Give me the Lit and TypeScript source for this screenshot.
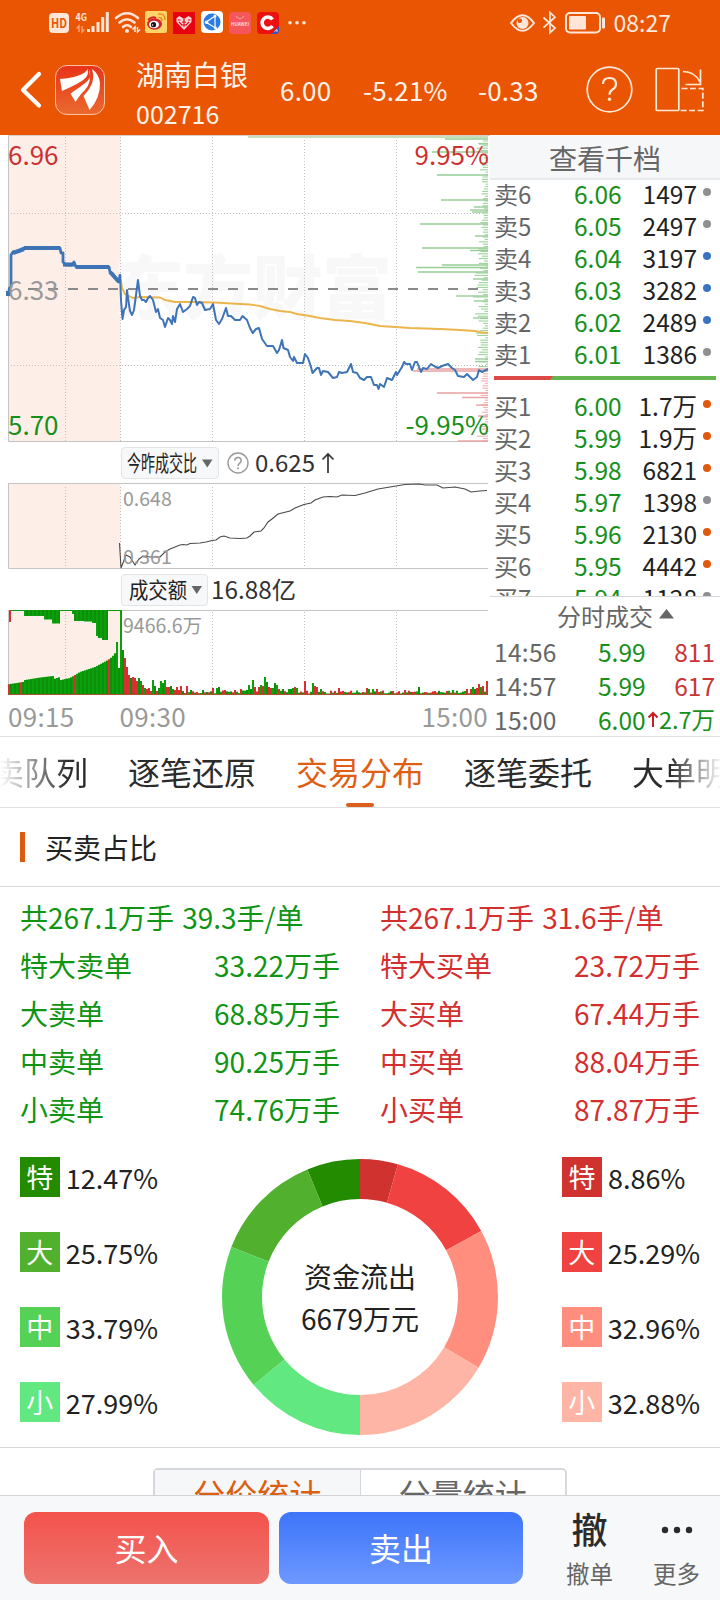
import { LitElement, html, svg, css } from "lit";
import { customElement } from "lit/decorators.js";

const FONT = css`"Noto Sans CJK SC", "Noto Sans", sans-serif`;

/** Small deterministic generator, for the filler ticks of the charts. */
function rng(seed: number) {
  let s = seed;
  return () => {
    s = (s * 1103515245 + 12345) & 0x7fffffff;
    return s / 0x7fffffff;
  };
}

@customElement("status-bar")
class StatusBar extends LitElement {
  static styles = css`
    :host { display: flex; height: 44px; justify-content: space-between; padding: 0 49px; font-family: ${FONT}; }
    svg { display: block; }
    .right { display: flex; align-items: flex-start; gap: 8px; }
    .time { font-size: 23px; line-height: 44px; color: #ffeade; }
  `;
  render() {
    const c = "#ffe6d8";
    return html`
      <svg width="260" height="44" viewBox="49 0 260 44">
        <rect x="49" y="13" width="20" height="20" rx="4" fill=${c} />
        <text x="51" y="28.3" font-size="13" font-weight="700" fill="#ea5504" textLength="16" lengthAdjust="spacingAndGlyphs">HD</text>
        <text x="75.5" y="20.5" font-size="10.5" font-weight="700" fill=${c} textLength="11.5" lengthAdjust="spacingAndGlyphs">4G</text>
        <path d="M79 32v-6l-2.5 2.5M82 26v6l2.500-2.500" stroke="#f4a077" stroke-width="1.5" fill="none" />
        <path d="M88.500 32v-3M93 32v-6M98 32v-10M102.700 32v-15M107.300 32v-20" stroke=${c} stroke-width="3" />
        <path d="M116 18q11-9.500 22 0M119.500 22.500q7.500-6.500 15 0M123 27q4-3.500 8 0" stroke=${c} stroke-width="2.600" fill="none" stroke-linecap="round" />
        <circle cx="127" cy="31" r="2" fill=${c} />
        <path d="M135 32v-5l-2.500 2.500M137.500 27v5l2.500-2.500" stroke=${c} stroke-width="1.500" fill="none" />
        <rect x="145" y="11" width="22" height="22" rx="2" fill="#fdd46a" />
        <ellipse cx="154.500" cy="24" rx="7.500" ry="5.700" fill="#d8232a" />
        <path d="M148 20q4-4 8-2" stroke="#d8232a" stroke-width="2" fill="none" />
        <ellipse cx="154" cy="24.500" rx="5" ry="3.800" fill="#fff" />
        <circle cx="153.500" cy="24.700" r="2.600" fill="#161616" />
        <circle cx="152.600" cy="25" r=".8" fill="#fff" />
        <path d="M158.500 17.500q3.500-.5 3.500 3.500M158 14q7-1 7 6" stroke="#ee8a1c" stroke-width="1.500" fill="none" />
        <rect x="173" y="12" width="22" height="22" fill="#e60012" />
        <path d="M184 30l-7.500-8v-4l3-2 4.500 3 4.500-3 3 2v4z" fill="#fbd7d7" />
        <path d="M178 20h2.500M182 22h4M188 20h2.500M181 25h6M184 19v8M179 22l3 3M189 22l-3 3" stroke="#e60012" stroke-width="1.100" />
        <rect x="201" y="11" width="22" height="22" rx="4" fill="#fff" />
        <circle cx="212" cy="22" r="8.500" fill="#2a7be4" />
        <path d="M206 22.300l9-6.300M206 22.300l9.500 5.700M215 16v12" stroke="#fff" stroke-width="1.200" fill="none" />
        <circle cx="206.500" cy="22.300" r="1.800" fill="#fff" /><circle cx="215" cy="16" r="1.500" fill="#fff" /><circle cx="215.500" cy="28" r="1.500" fill="#fff" />
        <rect x="229" y="12" width="22" height="22" rx="4" fill="#f4565c" />
        <path d="M236 16q4 5.500 8 0" stroke="#f9a9a4" stroke-width="1.200" fill="none" />
        <text x="231" y="26.300" font-size="4.800" font-weight="700" fill="#ffd9d4" textLength="18" lengthAdjust="spacingAndGlyphs">HUAWEI</text>
        <rect x="257" y="12" width="22" height="22" rx="4" fill="#ec1011" />
        <path d="M272.500 19.500a5.700 5.700 0 1 0 0 6.500" stroke="#fff" stroke-width="3.600" fill="none" />
        <path d="M279 26v4q0 4-4 4h-3.500z" fill="#2f57c4" />
        <path d="M274.500 31.500l2.500-2v2.500" stroke="#fff" stroke-width=".8" fill="none" />
        <circle cx="290" cy="22.700" r="1.800" fill=${c} /><circle cx="297" cy="22.700" r="1.800" fill=${c} /><circle cx="304" cy="22.700" r="1.800" fill=${c} />
      </svg>
      <div class="right">
        <svg width="97" height="44" viewBox="509 0 97 44">
          <path d="M511 23q11.500-15.500 23 0q-11.500 15.500-23 0z" fill="none" stroke=${c} stroke-width="2" />
          <circle cx="522.500" cy="23" r="6" fill=${c} /><circle cx="519.800" cy="20.700" r="2.300" fill="#ea5504" />
          <path d="M543.500 17.500l11.500 10.500-5 4.700V12.500l5 4.700-11.500 10.500" fill="none" stroke=${c} stroke-width="1.700" />
          <rect x="566" y="13" width="34" height="19.500" rx="4" fill="none" stroke=${c} stroke-width="2" />
          <rect x="569" y="16" width="17" height="13.500" rx="1" fill=${c} />
          <rect x="602" y="17.500" width="3" height="11" rx="1" fill=${c} />
        </svg>
        <span class="time">08:27</span>
      </div>`;
  }
}

@customElement("title-bar")
class TitleBar extends LitElement {
  static styles = css`
    :host { display: flex; height: 91px; box-sizing: border-box; font-family: ${FONT}; color: #fff3ea; align-items: center; padding: 0 15px 0 18px; font-size: 26px; }
    svg { display: block; flex: none; }
    .logo { margin-left: 12px; }
    .name { margin-left: 31px; width: 144px; padding-top: 8px; }
    .name div { font-size: 28px; line-height: 39px; height: 39px; }
    .name .code { font-size: 25px; line-height: 38px; height: 38px; }
    .num { line-height: 40px; white-space: nowrap; letter-spacing: 0.2px; }
    .n1 { width: 83px; } .n2 { width: 115px; } .n3 { width: 108px; }
    .rotate { margin-left: 22px; }
  `;
  render() {
    return html`
      <svg width="25" height="40" viewBox="18 70 25 40"><path d="M39 74L23 90l16 15.500" fill="none" stroke="#fff" stroke-width="4.200" stroke-linecap="round" stroke-linejoin="round" /></svg>
      <svg class="logo" width="50" height="50" viewBox="55 65 50 50">
        <defs><linearGradient id="g" x1="0" y1="0" x2="0" y2="1"><stop offset="0" stop-color="#e8331a" /><stop offset="1" stop-color="#ea6a2e" /></linearGradient></defs>
        <rect x="55.500" y="65.500" width="49" height="49" rx="11.500" fill="url(#g)" stroke="#f8c39f" />
        <path d="M60 79q16-1 24-6 3-2 3.500-4 1.500 5-2 9-5 5-23.500 13z" fill="#fff" />
        <path d="M89 69q3 7-1 11.500-4 4-17.500 13l5 8.500q5-8 9-11.500 8-8 4.500-21.500z" fill="#fff" />
        <path d="M92 69q3 10-1.500 17.500-2 4-7 9.500l6 14q11-12 10.500-27-1-9-8-14z" fill="#fff" />
      </svg>
      <div class="name"><div>湖南白银</div><div class="code">002716</div></div>
      <span class="num n1">6.00</span><span class="num n2">-5.21%</span><span class="num n3">-0.33</span>
      <svg width="47" height="47" viewBox="585.500 66.500 47 47">
        <circle cx="609" cy="90" r="22.300" fill="none" stroke="#fdebd8" stroke-width="1.700" />
        <path d="M602.500 84.500q0-6 6.500-6t6.500 6q0 3.500-3.500 5.500-3 2-3 5.200" fill="none" stroke="#fdebd8" stroke-width="2.200" />
        <circle cx="609" cy="99.700" r="1.700" fill="#fdebd8" />
      </svg>
      <svg class="rotate" width="50" height="47" viewBox="654.500 66.500 50 47">
        <rect x="655.700" y="69" width="22.600" height="42" rx="1" fill="none" stroke="#fdebd8" stroke-width="1.700" />
        <path d="M682.500 72q12 0 17 10.500M700 70v15h-15" fill="none" stroke="#fdebd8" stroke-width="1.700" />
        <path d="M681 89h21.300v22H680" fill="none" stroke="#fdebd8" stroke-width="1.700" stroke-dasharray="6 2.500" />
      </svg>`;
  }
}

const PRE =
  "8,296 9.500,288 11,287 11,255 13,252 20,251 22,249 24,248 60,248 61,253 63,253 63,262 66,265 72,265 74,262 76,267 109,267 110,272 113,274 119,282 120,275";
const PRICE =
  "120,274 121,300 122.500,319 124,310 126,307 127,290 128,298 130,311 132,315 134,310 136,295 138,280 140,296 142,300 144,300 146,302 148,298 150,296 153,300 156,312 158,309 160,318 163,320 165,327 168,318 170,320 172,324 173,316 175,322 177,309 180,304 183,312 187,309 190,306 193,297 195,298 197,305 199,302 202,303 205,310 210,309 213,304 216,320 219,324 222,319 226,308 228,316 231,316 235,320 240,320 242.500,316 247,320 250,328 252.700,333 256,329 259,328 262,339 267,346 273,346 277,353 279,350 282,340 283.500,348 288,350 290,357 293,361 294,357 297,363 303,363 305,354 308,358 311,367 312.500,373 317,368 319,368 321,375 323,371 328,372 333,378 337,377 339,372 342,373 347,372 351,364 353,372 357,373 360,378 364,380 367,377 371,377 374,385 377,385 378.500,389 380,384 384,387 387,378 392,380 396,372 397,375 402,367 404,362 406,364 410,364 412,370 415,362 417,362 419,367 421,372 423,368 427,369 431,364 434,366 438,368 442,366 448,364 452,368 455,370 458,376 464,377 467,374 470,377 473,380 477,377 479,370 482,372 488,369";
const AVG =
  "120,274 122,288 125,294 133,298 140,297 160,297.500 165,300 175,302 190,302 215,302.500 240,304 250,304.500 260,306 270,309 280,311 290,312 297,314 310,316 320,318 335,320 350,321 365,323 380,326 395,327 410,328 440,329 460,330 475,331 482,332.500 488,333";
const RATIO =
  "119.500,543 121,568 123,563 126,555 130,557 135,565 139,559 143,556 150,557 160,557 165,552 170,549 180,545 183,544.500 187,545 190,543.500 200,543 206,542 212,540.500 216,540 220,537 224,536 230,538 240,538.500 247,538 250,536 254,532 261,531 264,528 268,522 272,519 278,514 290,511 295,508 304,504.500 311,503 315,500 323,497 330,496.500 337,497 342,495 355,495.500 365,493 378,489 390,487 405,484.500 419,484 425,485 437,485 443,488 455,487 465,489 471,492 480,491 487,490.500";

const LEVELS: [number, number][] = [
  [139, 445], [144, 479], [152, 432], [175, 437], [200, 441], [207, 474], [210, 470], [212, 472], [224, 420], [236, 475],
  [248, 422], [250.5, 470], [265, 442], [267.5, 416], [272, 418], [279, 473], [296, 456], [301, 474], [318, 473], [359, 475],
  [361.5, 475], [369, 417], [371, 413], [393, 437], [397.5, 462], [405, 476], [416, 478], [441, 458],
];

/** Turnover bars: x, height and colour of the ones that stand out. */
const PEAKS: [number, number, string][] = [
  [121, 85, "g"], [123, 45, "g"], [125, 37, "r"], [127, 28, "r"], [129, 20, "r"], [131, 17, "g"], [133, 18, "r"], [135, 17, "r"],
  [137, 14, "r"], [139, 17, "g"], [141, 14, "g"], [143, 10, "r"], [145, 7, "g"], [147, 6, "r"], [149, 7, "r"], [151, 4, "r"],
  [153, 15, "g"], [155, 9, "g"], [157, 4, "r"], [159, 7, "g"], [161, 14, "g"], [163, 12, "g"], [165, 15, "g"], [167, 8, "r"],
  [169, 8, "r"], [171, 9, "g"], [173, 6, "g"], [175, 5, "r"], [177, 8, "r"], [179, 5, "r"], [181, 9, "r"], [187, 9, "r"],
  [191, 5, "g"], [203, 5, "g"], [213, 7, "r"], [217, 7, "g"], [219, 8, "g"], [225, 5, "r"], [235, 5, "r"], [241, 6, "r"],
  [247, 5, "g"], [249, 10, "g"], [251, 6, "g"], [253, 15, "g"], [255, 8, "r"], [259, 8, "r"], [261, 10, "g"], [263, 9, "r"], [265, 18, "g"],
  [267, 13, "g"], [269, 8, "r"], [271, 7, "r"], [273, 7, "g"], [275, 12, "g"], [277, 10, "g"], [279, 6, "r"], [283, 6, "g"],
  [289, 6, "g"], [291, 6, "g"], [293, 7, "g"], [295, 8, "r"], [297, 7, "g"], [305, 14, "r"], [313, 12, "g"], [315, 9, "r"],
  [317, 8, "r"], [321, 6, "g"], [339, 7, "r"], [367, 7, "r"], [369, 6, "g"], [373, 6, "g"], [377, 6, "r"], [405, 5, "r"],
  [419, 8, "g"], [453, 5, "g"], [467, 6, "r"], [471, 6, "r"], [473, 8, "g"], [475, 6, "g"], [477, 7, "r"], [479, 11, "r"],
  [481, 8, "g"], [483, 9, "r"], [487, 14, "r"],
];
const PRE_TOP: [number, number][] = [
  [10, 684], [23, 682], [25, 680], [40, 677.5], [53, 676], [54, 679], [60, 677], [61, 680], [70, 678], [80, 672], [95, 667],
  [108, 660], [112, 657], [116, 652], [119, 650],
];

const dots = (xs: number[], y1: number, y2: number) =>
  xs.map((x) => svg`<line x1=${x} x2=${x} y1=${y1} y2=${y2} stroke="#c0c0c0" stroke-dasharray="1 2" />`);
const VX = [65.5, 120.5, 212.5, 304.5, 396.5];

@customElement("trend-charts")
class TrendCharts extends LitElement {
  static styles = css`
    :host { display: flex; flex-direction: column; width: 490px; font-family: ${FONT}; }
    svg { display: block; flex: none; }
    .row { display: flex; align-items: center; height: 42px; flex: none; padding-left: 121px; color: #333; font-size: 24px; line-height: 30px; }
    .row.first { height: 41px; }
    .select { display: flex; align-items: center; height: 32px; box-sizing: border-box; background: #f7f8fa; border: 1px solid #e2e4e7; border-radius: 4px; }
    .help { margin: 0 6px 0 8px; }
    .arrow { margin-left: 6px; }
    .value { white-space: nowrap; padding-bottom: 2px; }
    .total { margin-left: 3px; font-size: 24.3px; }
    .axis { display: flex; height: 41px; box-sizing: border-box; font-size: 26px; letter-spacing: 0.3px; line-height: 41px; color: #999; padding: 0 2px 0 8px; }
    .axis span:nth-child(2) { margin-left: 45px; flex: 1; }
  `;

  private levels() {
    const rand = rng(7);
    const out = [];
    for (let y = 141; y < 441; y += 2.4) {
      const w = 2 + rand() * (y > 240 && y < 368 ? 9 : 5) + (rand() > 0.85 ? 5 : 0);
      const red = y > 368;
      out.push(svg`<line x1=${488 - w} x2="488" y1=${y} y2=${y} stroke=${red ? "#f2b4b4" : "#a3d5a3"} stroke-width="1.2" />`);
    }
    for (const [y, x] of LEVELS)
      out.push(svg`<line x1=${x} x2="488" y1=${y} y2=${y} stroke=${y > 368 ? "#eaa0a0" : "#95cd95"} stroke-width="1.4" />`);
    return out;
  }

  private turnover() {
    const rand = rng(23);
    const peaks = new Map(PEAKS.map(([x, h, c]) => [x, [h, c] as [number, string]]));
    const out = [];
    const bar = (x: number, y: number, h: number, g: boolean) =>
      out.push(svg`<rect x=${x - 1} y=${y} width="2" height=${h} fill=${g ? (x % 4 === 1 ? "#0aa00a" : "#0c900c") : "#d83030"} />`);
    for (let x = 9; x < 121; x += 2) {
      let k = 0;
      while (k < PRE_TOP.length - 2 && PRE_TOP[k + 1][0] <= x) k++;
      const [x0, y0] = PRE_TOP[k], [x1, y1] = PRE_TOP[k + 1];
      const y = x === 117 ? 642 : x === 119 ? 668 : Math.max(640, y0 + ((x - x0) / (x1 - x0)) * (y1 - y0));
      bar(x, y, 695 - y, !(x === 9 || x === 21 || x === 75 || x === 109));
      const hang = x < 24 ? 1 : x < 44 ? 6 : x < 53 ? 9.5 : x < 61 ? 13.5 : x < 73 ? 1 : x < 75 ? 4 : x < 85 ? 11 : x < 92 ? 11.5 : x < 96 ? 13 : x < 98 ? 26 : x < 102 ? 28 : x < 109 ? 30 : 1;
      if (x > 9) bar(x, 610, hang, true);
    }
    bar(10, 610, 12, false);
    for (let x = 121; x <= 487; x += 2) {
      const p = peaks.get(x);
      if (p) bar(x, 695 - p[0], p[0], p[1] === "g");
      else {
        const h = 1.5 + rand() * 3;
        bar(x, 695 - h, h, rand() > 0.52);
      }
    }
    return out;
  }

  render() {
    return html`
      <svg width="490" height="307" viewBox="0 135 490 307" font-size="26">
        <rect x="8" y="135" width="112.500" height="306" fill="#fdeee8" />
        <text x="114" y="314" font-size="70" font-weight="900" fill="#f8f8f9" textLength="278">东方财富</text>
        ${dots(VX, 137, 441)}
        <path d="M11 213.500H488M11 365.500H488" stroke="#c0c0c0" stroke-dasharray="1 2" />
        <path d="M8.500 135V441.500H488" fill="none" stroke="#c4c4c4" />
        <rect x="8" y="135" width="482" height="1" fill="#d9cfc8" />
        <rect x="248" y="136" width="240" height="2" fill="#c6dfba" />
        ${this.levels()}
        <path d="M28 289H478" stroke="#8a8a8a" stroke-width="1.800" stroke-dasharray="10 10" />
        <polyline points=${AVG} fill="none" stroke="#ecb54c" stroke-width="1.900" />
        <polyline points=${PRE} fill="none" stroke="#3e74b6" stroke-width="2.800" stroke-linejoin="round" />
        <path d="M24 248H60M63 264.500H74M76 267H109M110 272L119 282M8 296V291M13 253L24 249" stroke="#3e74b6" stroke-width="4" />
        <polyline points=${PRICE} fill="none" stroke="#3e74b6" stroke-width="2" stroke-linejoin="round" />
        <text x="8" y="165" fill="#cc3030">6.96</text>
        <text x="8" y="300" fill="#999">6.33</text>
        <text x="8" y="435" fill="#16901a">5.70</text>
        <text x="489" y="165" fill="#cc3030" text-anchor="end">9.95%</text>
        <text x="489" y="435" fill="#16901a" text-anchor="end">-9.95%</text>
      </svg>
      <div class="row first">
        <div class="select">
          <svg width="96" height="30" viewBox="122 447 96 30"><text x="127" y="470" font-size="22" fill="#222" textLength="70" lengthAdjust="spacingAndGlyphs">今昨成交比</text><path d="M202 458.500h10.500l-5.250 8z" fill="#666" /></svg>
        </div>
        <svg class="help" width="22" height="22" viewBox="0 0 22 22"><circle cx="11" cy="11" r="10" fill="none" stroke="#999" stroke-width="1.400" /><path d="M7.800 8.800q0-3.300 3.200-3.300t3.200 3.100q0 1.700-1.700 2.700-1.500 1-1.500 2.600" fill="none" stroke="#999" stroke-width="1.500" /><circle cx="11" cy="16.300" r="1" fill="#999" /></svg>
        <span class="value">0.625</span>
        <svg class="arrow" width="14" height="22" viewBox="0 0 14 22"><path d="M7 21V2M1.500 7.500L7 2l5.500 5.500" fill="none" stroke="#333" stroke-width="1.700" /></svg>
      </div>
      <svg width="490" height="86" viewBox="0 483 490 86" font-size="19.500" fill="#999">
        <rect x="8" y="483" width="112.500" height="85" fill="#fdeee8" />
        ${dots(VX, 487, 568)}
        <path d="M488 483.500H8.500V568.500H488" fill="none" stroke="#c4c4c4" />
        <polyline points=${RATIO} fill="none" stroke="#4a4a4a" stroke-width="1.100" />
        <text x="123" y="506">0.648</text><text x="123" y="563.500">0.361</text>
      </svg>
      <div class="row">
        <div class="select">
          <svg width="85" height="30" viewBox="122 574 85 30"><text x="129" y="597" font-size="22" fill="#222" textLength="58" lengthAdjust="spacingAndGlyphs">成交额</text><path d="M191.500 585h10.500l-5.250 8z" fill="#666" /></svg>
        </div>
        <span class="value total">16.88亿</span>
      </div>
      <svg width="490" height="84" viewBox="0 611 490 84" font-size="19.500" fill="#999" overflow="visible">
        <rect x="8" y="610" width="112.500" height="85" fill="#fdeee8" />
        ${dots(VX, 612, 695)}
        <path d="M488 610.500H8.500V695" fill="none" stroke="#c4c4c4" />
        ${this.turnover()}
        <rect x="8" y="694" width="480" height="1" fill="#a8542a" />
        <text x="123" y="633">9466.6万</text>
      </svg>
      <div class="axis"><span>09:15</span><span>09:30</span><span>15:00</span></div>`;
  }
}

const G = "#8e8e93", B = "#3a74c0", O = "#e0590f";
const SELLS = [["卖6", "6.06", "1497", G], ["卖5", "6.05", "2497", G], ["卖4", "6.04", "3197", B], ["卖3", "6.03", "3282", B], ["卖2", "6.02", "2489", B], ["卖1", "6.01", "1386", G]];
const BUYS = [["买1", "6.00", "1.7万", O], ["买2", "5.99", "1.9万", O], ["买3", "5.98", "6821", O], ["买4", "5.97", "1398", G], ["买5", "5.96", "2130", O], ["买6", "5.95", "4442", O], ["买7", "5.94", "1128", G]];

@customElement("order-book")
class OrderBook extends LitElement {
  static styles = css`
    :host { display: flex; flex-direction: column; width: 230px; height: 601px; font-family: ${FONT}; font-size: 24.5px; }
    .more { height: 45px; flex: none; box-sizing: border-box; border-bottom: 2px solid #e8e9eb; background: #f6f7f9; text-align: center; font-size: 28px; line-height: 46px; color: #666; }
    .book { height: 416px; flex: none; overflow: hidden; }
    .line { display: grid; grid-template-columns: 80px 1fr 60px 18px; height: 32px; line-height: 27.4px; padding: 0 5px 0 4px; }
    .line > :nth-child(1) { color: #666; font-size: 24px; }
    .price { color: #16901a; }
    .qty { color: #222; text-align: right; }
    .dot { justify-self: end; width: 8.5px; height: 8.5px; border-radius: 50%; margin: 7.5px 4px 0 0; }
    .ratio { display: flex; margin: 4px 4px 12.3px; height: 4px; background: #66b550; }
    .ratio div { width: 59px; background: #dc4a48; clip-path: polygon(0 0, 100% 0, 56px 100%, 0 100%); }
    .deals { border-top: 1px solid #d5d6d8; height: 38px; box-sizing: border-box; flex: none; line-height: 38px; padding-left: 67px; color: #666; font-size: 24px; display: flex; gap: 6px; }
    .deals svg { margin-top: 12px; }
    .deal { display: grid; grid-template-columns: 104px 50px 1fr; height: 34px; line-height: 35px; padding: 0 5px 0 4px; }
    .deal > :first-child { color: #666; letter-spacing: 0.3px; }
    .amount { text-align: right; color: #c93434; }
    .last { grid-template-columns: 104px 49px 12px 1fr; padding-right: 6px; }
    .last .amount { color: #16901a; white-space: nowrap; font-size: 23.5px; }
    .up { margin: 9px 0 0; }
  `;
  line([label, price, qty, color]: string[]) {
    return html`<div class="line"><span>${label}</span><span class="price">${price}</span><span class="qty">${qty}</span><i class="dot" style="background:${color}"></i></div>`;
  }
  render() {
    return html`
      <div class="more">查看千档</div>
      <div class="book">
        ${SELLS.map((r) => this.line(r))}
        <div class="ratio"><div></div></div>
        ${BUYS.map((r) => this.line(r))}
      </div>
      <div class="deals">分时成交 <svg width="15" height="10"><path d="M0 9.500L7.500 0 15 9.500z" fill="#666" /></svg></div>
      <div class="deal"><span>14:56</span><span class="price">5.99</span><span class="amount">811</span></div>
      <div class="deal"><span>14:57</span><span class="price">5.99</span><span class="amount">617</span></div>
      <div class="deal last"><span>15:00</span><span class="price">6.00</span><svg class="up" width="12" height="17"><path d="M6 16V2M1.500 6.500L6 2l4.500 4.500" fill="none" stroke="#c81e1e" stroke-width="2" /></svg><span class="amount">2.7万</span></div>`;
  }
}

const SELL_STATS = [["特大卖单", "33.22万手"], ["大卖单", "68.85万手"], ["中卖单", "90.25万手"], ["小卖单", "74.76万手"]];
const BUY_STATS = [["特大买单", "23.72万手"], ["大买单", "67.44万手"], ["中买单", "88.04万手"], ["小买单", "87.87万手"]];
type Slice = [string, number, string];
const OUT: Slice[] = [["特", 12.47, "#228b00"], ["大", 25.75, "#52b02f"], ["中", 33.79, "#55d156"], ["小", 27.99, "#62e880"]];
const IN: Slice[] = [["特", 8.86, "#d0322f"], ["大", 25.29, "#f04240"], ["中", 32.96, "#ff8e7e"], ["小", 32.88, "#ffb5a5"]];

@customElement("trade-split")
class TradeSplit extends LitElement {
  static styles = css`
    :host { display: block; font-family: ${FONT}; font-size: 28px; }
    .heading { display: flex; align-items: center; gap: 20px; height: 79px; border-bottom: 1px solid #d8d9db; padding-left: 20px; color: #222; box-sizing: border-box; }
    .heading i { width: 5px; height: 30px; background: #dc5a10; }
    .heading span { padding-bottom: 1px; line-height: 40px; }
    .stats { display: grid; grid-template-columns: 320px 320px; gap: 40px; padding: 6px 20px 0; height: 252px; box-sizing: border-box; line-height: 48px; color: #0f9414; }
    .buy { color: #d32f2f; }
    .total { white-space: pre; word-spacing: 2px; }
    .pair { display: flex; justify-content: space-between; }
    .ring { display: flex; justify-content: space-between; height: 309px; padding: 18px 20px 0; box-sizing: border-box; border-bottom: 1px solid #d8d9db; }
    .keys { display: flex; flex-direction: column; gap: 35px; width: 138px; color: #222; font-size: 27px; }
    .key { display: flex; height: 40px; gap: 6px; line-height: 41px; white-space: nowrap; }
    .key b { width: 40px; font-weight: 400; color: #fff; text-align: center; line-height: 40px; }
    .donut { display: grid; place-items: center; width: 280px; height: 280px; }
    .donut > * { grid-area: 1 / 1; }
    .caption { text-align: center; line-height: 42.5px; color: #222; }
  `;
  keys(list: Slice[]) {
    return html`<div class="keys">${list.map(([n, v, c]) => html`<div class="key"><b style="background:${c}">${n}</b><span>${v.toFixed(2)}%</span></div>`)}</div>`;
  }
  arcs(list: Slice[], dir: number) {
    const total = list.reduce((s, i) => s + i[1], 0);
    let a = 0;
    const p = (r: number, t: number) => `${(140 + dir * r * Math.sin(t)).toFixed(2)} ${(140 - r * Math.cos(t)).toFixed(2)}`;
    const s = dir > 0 ? 1 : 0;
    return list.map(([, v, c]) => {
      const b = a + (v / total) * Math.PI;
      const d = `M${p(138, a)}A138 138 0 0 ${s} ${p(138, b)}L${p(98, b)}A98 98 0 0 ${1 - s} ${p(98, a)}Z`;
      a = b;
      return svg`<path d=${d} fill=${c} />`;
    });
  }
  render() {
    const col = (cls: string, total: string, rows: string[][]) => html`
      <div class=${cls}><div class="total">${total}</div>${rows.map(([a, b]) => html`<div class="pair"><span>${a}</span><span>${b}</span></div>`)}</div>`;
    return html`
      <div class="heading"><i></i><span>买卖占比</span></div>
      <div class="stats">
        ${col("sell", "共267.1万手 39.3手/单", SELL_STATS)}
        ${col("buy", "共267.1万手 31.6手/单", BUY_STATS)}
      </div>
      <div class="ring">
        ${this.keys(OUT)}
        <div class="donut"><svg width="280" height="280">${this.arcs(IN, 1)}${this.arcs(OUT, -1)}</svg><div class="caption">资金流出<br />6679万元</div></div>
        ${this.keys(IN)}
      </div>`;
  }
}

@customElement("app-root")
class AppRoot extends LitElement {
  static styles = css`
    :host { display: flex; flex-direction: column; width: 720px; height: 1600px; overflow: hidden; background: #fff; font-family: ${FONT}; }
    header { background: #ea5504; flex: none; }
    .market { display: flex; height: 601px; border-bottom: 1px solid #dedfe1; flex: none; }
    .tabs { display: flex; justify-content: center; gap: 40px; height: 70px; flex: none; overflow: hidden; border-bottom: 1px solid #dedfe1; font-size: 32px; line-height: 68px; color: #2b2b2b; }
    .tab { flex: none; width: 128px; }
    .tab.first { background: linear-gradient(90deg, #fff 40px, #2b2b2b 108px); -webkit-background-clip: text; background-clip: text; color: transparent; }
    .tab.final { background: linear-gradient(270deg, #fff 38px, #2b2b2b 90px); -webkit-background-clip: text; background-clip: text; color: transparent; }
    .tab.on { display: flex; flex-direction: column; align-items: center; height: 70px; color: #e05e14; }
    .tab.on i { width: 28px; height: 4px; border-radius: 2px; background: #dc5f1e; margin-top: -4px; }
    .tab.on span { height: 70px; }
    .switch { flex: 1; min-height: 0; overflow: hidden; padding: 20px 153px 0; }
    .seg { display: flex; height: 60px; border: 2px solid #d6d8db; border-radius: 5px; box-sizing: border-box; font-size: 32px; line-height: 46px; color: #666; text-align: center; }
    .seg div { flex: 1; }
    .seg .on { background: #f6f7f9; color: #d9600f; border-right: 1px solid #d6d8db; }
    footer { display: flex; height: 105px; box-sizing: border-box; border-top: 1px solid #d2d4d7; background: #f7f8fa; flex: none; padding: 16px 0 0 24px; }
    .btn { height: 72px; border-radius: 12px; color: #fff; font-size: 32px; line-height: 70px; text-align: center; }
    .buy { width: 245px; background: linear-gradient(#f4524c, #ed736d); }
    .sell { width: 244px; margin-left: 10px; background: linear-gradient(#3d75fa, #6d98ff); }
    .act { display: flex; flex-direction: column; align-items: center; color: #666; font-size: 23.5px; width: 87px; line-height: 30px; }
    .act:nth-of-type(3) { margin-left: 23px; }
    .act b { font-size: 36px; font-weight: 500; line-height: 32px; height: 46px; color: #2b2b2b; }
    .act svg { height: 46px; }
  `;
  render() {
    return html`
      <header><status-bar></status-bar><title-bar></title-bar></header>
      <div class="market"><trend-charts></trend-charts><order-book></order-book></div>
      <nav class="tabs">
        <span class="tab first">买卖队列</span><span class="tab">逐笔还原</span>
        <span class="tab on"><span>交易分布</span><i></i></span>
        <span class="tab">逐笔委托</span><span class="tab final">大单明细</span>
      </nav>
      <trade-split></trade-split>
      <div class="switch"><div class="seg"><div class="on">分价统计</div><div>分量统计</div></div></div>
      <footer>
        <div class="btn buy">买入</div>
        <div class="btn sell">卖出</div>
        <div class="act"><b>撤</b>撤单</div>
        <div class="act"><svg width="34" height="46"><circle cx="5" cy="18" r="3.200" fill="#2b2b2b" /><circle cx="17" cy="18" r="3.200" fill="#2b2b2b" /><circle cx="29" cy="18" r="3.200" fill="#2b2b2b" /></svg>更多</div>
      </footer>`;
  }
}
